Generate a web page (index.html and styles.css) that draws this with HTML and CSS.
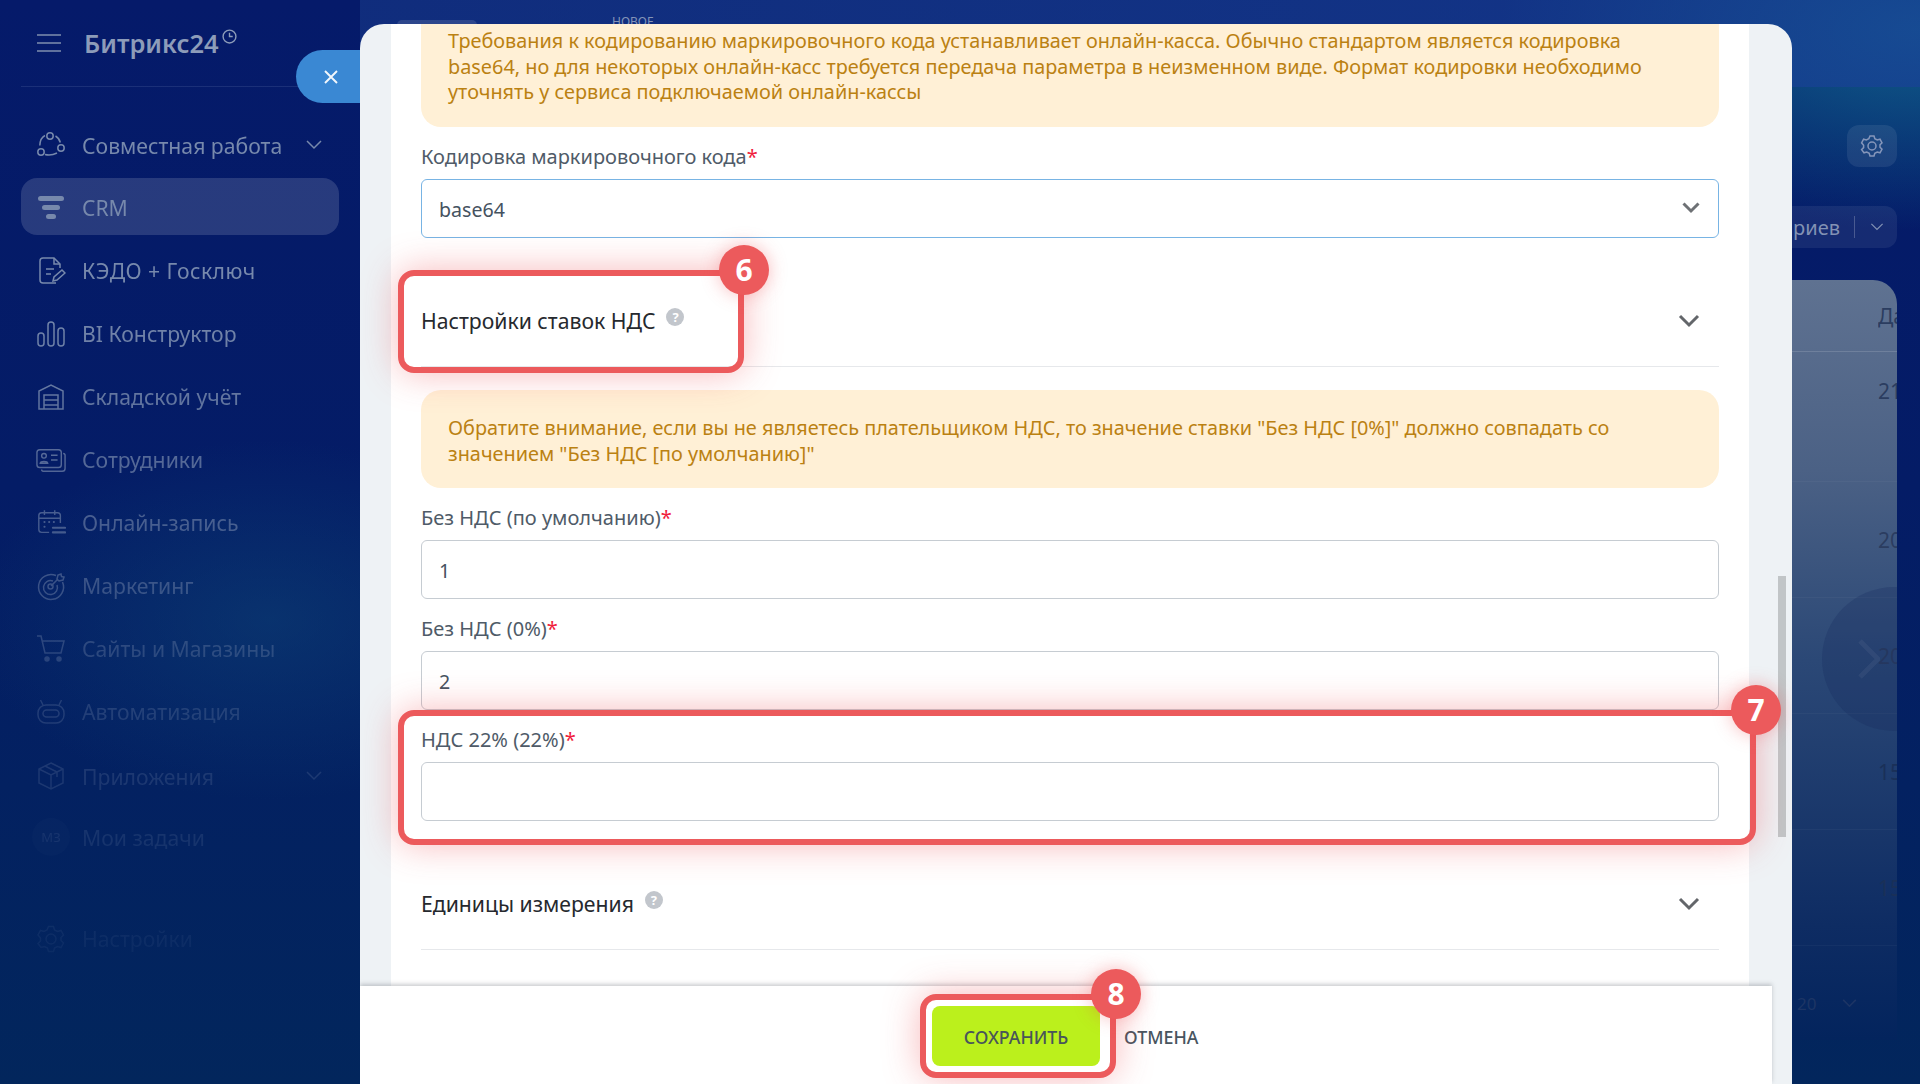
FILE: index.html
```html
<!DOCTYPE html>
<html lang="ru">
<head>
<meta charset="utf-8">
<title>Битрикс24</title>
<link rel="stylesheet" href="styles.css">
</head>
<body>
<div class="app">
  <aside class="sidebar">
    <div class="brand">
      <svg class="burger" viewBox="0 0 24 18"><path d="M0 1h24M0 9h24M0 17h24"/></svg>
      <span class="brand-name">Битрикс24</span>
      <svg class="clock" viewBox="0 0 14 14"><circle cx="7" cy="7" r="6"/><path d="M7 3.5V7h3"/></svg>
    </div>
    <nav class="nav">
      <a class="item item-a">
        <svg class="ico" viewBox="0 0 30 30"><circle cx="14" cy="6" r="3.2"/><circle cx="5" cy="22" r="3.2"/><circle cx="25" cy="18" r="3.2"/><path d="M9 5.500C6 7 4 10.500 3.800 15.500M19.500 6C22 7.500 23.800 10 24.300 12.500M9 24.500c4 1 8 .5 12-1.500"/></svg>
        <span class="label">Совместная работа</span>
        <svg class="chev" viewBox="0 0 16 10"><path d="M1 1l7 7 7-7"/></svg>
      </a>
      <a class="item item-active">
        <svg class="ico ico-solid" viewBox="0 0 30 30"><rect x="2" y="3" width="26" height="5" rx="2.500"/><rect x="6" y="12" width="18" height="5" rx="2.500"/><rect x="10" y="21" width="10" height="5" rx="2.500"/></svg>
        <span class="label">CRM</span>
      </a>
      <a class="item item-kedo">
        <svg class="ico" viewBox="0 0 30 30"><path d="M20 27H7a3 3 0 0 1-3-3V5a3 3 0 0 1 3-3h11l6 6v4"/><path d="M18 2v6h6"/><path d="M10 13h8M10 18h5"/><path d="M17 25l1-4 8-7 3 3-8 7z"/></svg>
        <span class="label">КЭДО + Госключ</span>
      </a>
      <a class="item">
        <svg class="ico" viewBox="0 0 30 30"><rect x="2" y="14" width="6" height="13" rx="3"/><rect x="12" y="3" width="6" height="24" rx="3"/><rect x="22" y="9" width="6" height="18" rx="3"/></svg>
        <span class="label">BI Конструктор</span>
      </a>
      <a class="item">
        <svg class="ico" viewBox="0 0 30 30"><path d="M3 27V9l12-6 12 6v18z"/><path d="M8 27V13h14v14M8 18h14M8 23h14"/></svg>
        <span class="label">Складской учёт</span>
      </a>
      <a class="item">
        <svg class="ico" viewBox="0 0 32 30"><rect x="1" y="4" width="26" height="19" rx="3"/><path d="M29 8c1.500 0 2 1 2 2v14c0 2-1 3-3 3H9c-2 0-3-1-3-2"/><circle cx="8.500" cy="10.500" r="2.500"/><path d="M4.500 18.500c.5-2.500 7.500-2.500 8 0zM16 10h7M16 15h7"/></svg>
        <span class="label">Сотрудники</span>
      </a>
      <a class="item">
        <svg class="ico" viewBox="0 0 32 30"><path d="M14 25H6a3 3 0 0 1-3-3V7a3 3 0 0 1 3-3h17a3 3 0 0 1 3 3v8"/><path d="M9 1.500v5M20 1.500v5M3 10h23"/><path d="M9 14h.1M14 14h.1M19 14h.1M9 19h.1M18 20h13M18 25h13" class="thick"/></svg>
        <span class="label">Онлайн-запись</span>
      </a>
      <a class="item">
        <svg class="ico" viewBox="0 0 30 30"><path d="M20 4.500A12.500 12.500 0 1 0 26.500 11"/><path d="M17 10a7 7 0 1 0 4 4"/><circle cx="14.500" cy="15.500" r="2.500"/><path d="M15 15l7-7M21 8l1-4 3-1 .5 2.500L28 6l-1 3-4 1z"/></svg>
        <span class="label">Маркетинг</span>
      </a>
      <a class="item">
        <svg class="ico" viewBox="0 0 30 30"><path d="M1 2h4l4 17h16l3-12H6"/><circle cx="11" cy="25" r="2" class="dot"/><circle cx="23" cy="25" r="2" class="dot"/></svg>
        <span class="label">Сайты и Магазины</span>
      </a>
      <a class="item">
        <svg class="ico" viewBox="0 0 30 30"><rect x="2" y="8" width="26" height="18" rx="8"/><rect x="7" y="13" width="16" height="7" rx="3.500"/><path d="M7 8L4.500 3M23 8l2.500-5"/></svg>
        <span class="label">Автоматизация</span>
      </a>
      <a class="item item-apps">
        <svg class="ico" viewBox="0 0 30 30"><path d="M15 2l12 6v14l-12 6-12-6V8z"/><path d="M3 8l12 6 12-6M15 14v14M9 5l12 6v5"/></svg>
        <span class="label">Приложения</span>
        <svg class="chev" viewBox="0 0 16 10"><path d="M1 1l7 7 7-7"/></svg>
      </a>
      <a class="item item-tasks">
        <span class="avatar">МЗ</span>
        <span class="label">Мои задачи</span>
      </a>
      <a class="item item-settings">
        <svg class="ico" viewBox="0 0 30 30"><circle cx="15" cy="15" r="5"/><path d="M12.500 2.500h5l1 3.500 3 1.500 3.500-1 2.500 4.500-2.500 2.500v3l2.500 2.500-2.500 4.500-3.500-1-3 1.500-1 3.500h-5l-1-3.500-3-1.500-3.500 1L2 19.500 4.500 17v-3L2 11l2.500-4.500 3.500 1 3-1.500z"/></svg>
        <span class="label">Настройки</span>
      </a>
    </nav>
  </aside>

  <main class="main">
    <div class="topbar">
      <span class="tab"></span>
      <span class="new">НОВОЕ</span>
    </div>
    <div class="tools">
      <button class="gear">
        <svg viewBox="0 0 30 30"><circle cx="15" cy="15" r="5"/><path d="M12.500 2.500h5l1 3.500 3 1.500 3.500-1 2.500 4.500-2.500 2.500v3l2.500 2.500-2.500 4.500-3.500-1-3 1.500-1 3.500h-5l-1-3.500-3-1.500-3.500 1L2 19.500 4.500 17v-3L2 11l2.500-4.500 3.500 1 3-1.500z"/></svg>
      </button>
      <div class="scen">
        <span class="scen-text">Сценариев</span>
        <span class="scen-sep"></span>
        <svg class="scen-chev" viewBox="0 0 16 10"><path d="M1 1l7 7 7-7"/></svg>
      </div>
    </div>
    <section class="card">
      <div class="row row-head"><span class="cell">Дата</span></div>
      <div class="row row-first"><span class="cell">21</span></div>
      <div class="row"><span class="cell">20</span></div>
      <div class="row"><span class="cell">20</span></div>
      <div class="row"><span class="cell">15</span></div>
      <div class="row"><span class="cell">15</span></div>
      <div class="pager"><span>20</span><svg viewBox="0 0 16 10"><path d="M1 1l7 7 7-7"/></svg></div>
      <div class="carousel"><svg viewBox="0 0 22 40"><path d="M2 2l18 18L2 38"/></svg></div>
    </section>
  </main>
</div>

<button class="close"><svg viewBox="0 0 16 16"><path d="M2 2l12 12M14 2L2 14"/></svg></button>

<div class="slider">
  <div class="sheet">
    <div class="warn warn-top">Требования к кодированию маркировочного кода устанавливает онлайн-касса. Обычно стандартом является кодировка base64, но для некоторых онлайн-касс требуется передача параметра в неизменном виде. Формат кодировки необходимо уточнять у сервиса подключаемой онлайн-кассы</div>
    <div class="field">
      <label class="flabel">Кодировка маркировочного кода<span class="req">*</span></label>
      <div class="input select">base64
        <svg class="select-chev" viewBox="0 0 18 12"><path d="M1.500 1.500L9 9l7.500-7.500"/></svg>
      </div>
    </div>
    <div class="section">
      <span class="stitle">Настройки ставок НДС</span>
      <span class="help">?</span>
      <svg class="section-chev" viewBox="0 0 22 14"><path d="M2 2l9 9 9-9"/></svg>
    </div>
    <div class="warn warn-vat">Обратите внимание, если вы не являетесь плательщиком НДС, то значение ставки "Без НДС [0%]" должно совпадать со значением "Без НДС [по умолчанию]"</div>
    <div class="field">
      <label class="flabel">Без НДС (по умолчанию)<span class="req">*</span></label>
      <div class="input">1</div>
    </div>
    <div class="field">
      <label class="flabel">Без НДС (0%)<span class="req">*</span></label>
      <div class="input">2</div>
    </div>
    <div class="field">
      <label class="flabel">НДС 22% (22%)<span class="req">*</span></label>
      <div class="input"></div>
    </div>
    <div class="section">
      <span class="stitle">Единицы измерения</span>
      <span class="help">?</span>
      <svg class="section-chev" viewBox="0 0 22 14"><path d="M2 2l9 9 9-9"/></svg>
    </div>
  </div>
  <div class="scrollbar"></div>
  <div class="footer">
    <button class="save">СОХРАНИТЬ</button>
    <button class="cancel">ОТМЕНА</button>
  </div>
  <div class="mark mark-6"><span class="badge">6</span></div>
  <div class="mark mark-7"><span class="badge">7</span></div>
  <div class="mark mark-8"><span class="badge">8</span></div>
</div>
</body>
</html>
```
FILE: styles.css
```css
* { box-sizing: border-box; }
html, body { margin: 0; height: 1084px; overflow: hidden; }
body {
  font-family: "Noto Sans", "Open Sans", sans-serif;
  background:
    radial-gradient(420px 200px at 1920px 30px, rgba(20,120,150,.75), rgba(20,120,150,0) 100%),
    radial-gradient(300px 180px at 270px 620px, rgba(14,70,120,.5), rgba(14,70,120,0) 100%),
    linear-gradient(180deg, #051a6a 0%, #041c66 45%, #02265c 100%);
}
.app { display: flex; height: 1084px; }
svg { display: block; fill: none; stroke: currentColor; }

/* sidebar */
.sidebar { width: 360px; flex: none; padding: 0 21px; }
.brand {
  height: 87px; margin-right: -21px; padding: 0 0 1px 16px;
  display: flex; align-items: center;
  border-bottom: 1px solid rgba(140,160,200,.16);
  color: #8d9cb9;
}
.burger { width: 24px; height: 18px; stroke-width: 1.6; color: #7f8eaf; }
.brand-name { margin-left: 23px; font-size: 25.5px; font-weight: 600; line-height: 36px; }
.clock { width: 15px; height: 15px; margin: -12px 0 0 3px; stroke-width: 1.3; }
.nav {
  margin-top: 28px; display: flex; flex-direction: column;
  -webkit-mask-image: linear-gradient(180deg, #000 0%, #000 22%, rgba(0,0,0,.3) 65%, rgba(0,0,0,.07) 100%);
  mask-image: linear-gradient(180deg, #000 0%, #000 22%, rgba(0,0,0,.3) 65%, rgba(0,0,0,.07) 100%);
}
.item {
  height: 57px; margin-bottom: 6px; padding: 2px 14px 0 15px;
  display: flex; align-items: center;
  color: #7789ac; font-size: 21.2px; border-radius: 16px;
}
.item-a { height: 60px; margin-bottom: 3px; padding-top: 0; }
.item-active { background: rgba(255,255,255,.14); }
.item-kedo .label { letter-spacing: .45px; }
.item-apps { height: 58px; margin-top: 2px; margin-bottom: 3px; padding-top: 0; }
.item-tasks { height: 58px; margin-bottom: 43px; padding-top: 0; }
.ico { width: 30px; height: 30px; flex: none; stroke-width: 1.5; }
.ico-solid { fill: currentColor; stroke: none; }
.thick { stroke-width: 2.2; stroke-linecap: round; }
.dot { fill: currentColor; }
.label { margin-left: 16px; flex: 1; white-space: nowrap; }
.chev { width: 16px; height: 10px; flex: none; stroke-width: 1.5; margin-right: 3px; }
.avatar {
  width: 38px; height: 38px; margin: 0 -4px; flex: none; border-radius: 50%;
  display: flex; align-items: center; justify-content: center;
  background: rgba(255,255,255,.09); font-size: 13px;
}

/* page behind the slider */
.main { flex: 1; display: flex; flex-direction: column; min-width: 0; }
.topbar {
  height: 87px; flex: none; position: relative;
  background: linear-gradient(90deg, rgba(25,60,140,.55), rgba(25,65,150,.7));
}
.tab { display: block; position: absolute; left: 37px; top: 20px; width: 80px; height: 10px; border-radius: 8px; background: rgba(255,255,255,.12); }
.new { position: absolute; left: 252px; top: 13px; font-size: 12px; color: #8495b8; }
.tools { height: 193px; flex: none; padding: 38px 23px 0 0; display: flex; flex-direction: column; align-items: flex-end; gap: 39px; }
.gear {
  width: 50px; height: 42px; padding: 0; border: 0; border-radius: 12px;
  background: rgba(255,255,255,.08); color: #8596ba;
  display: flex; align-items: center; justify-content: center;
}
.gear svg { width: 24px; height: 24px; stroke-width: 1.9; }
.scen {
  height: 42px; padding: 0 13px 0 15px; border-radius: 12px; background: rgba(255,255,255,.07);
  display: flex; align-items: center; color: #8292b4; font-size: 20px;
}
.scen-sep { width: 1px; height: 22px; margin: 0 15px 0 14px; background: rgba(255,255,255,.22); }
.scen-chev { width: 14px; height: 8px; stroke-width: 1.5; }
.card {
  position: relative; height: 760px; margin: 0 23px 0 37px; flex: none; overflow: hidden;
  border-radius: 24px 24px 0 0;
  background: linear-gradient(180deg, #5f7291 0%, #4b6185 25%, #2b4876 50%, #0e2c63 85%, #03245d 100%);
  color: #2b3d60; font-size: 21px;
}
.row { height: 116px; display: flex; align-items: center; justify-content: flex-end; border-bottom: 1px solid rgba(255,255,255,.035); }
.row-head { height: 72px; border-bottom: 1px solid rgba(255,255,255,.14); }
.row-first { height: 130px; align-items: flex-start; padding-top: 25px; }
.cell { width: 19px; overflow: hidden; white-space: nowrap; }
.row:nth-child(5), .row:nth-child(6) { color: #1a3058; }
.pager {
  position: absolute; left: 1400px; top: 712px; width: 90px;
  display: flex; align-items: center; gap: 26px; color: #1d3565; font-size: 17px;
}
.pager svg { width: 15px; height: 9px; stroke-width: 1.8; }
.carousel {
  position: absolute; left: 1425px; top: 307px; width: 144px; height: 144px; border-radius: 50%;
  background: rgba(20,40,90,.25); display: flex; align-items: center; padding-left: 36px; color: rgba(255,255,255,.05);
}
.carousel svg { width: 22px; height: 40px; stroke-width: 5; }

/* close button */
.close {
  position: absolute; left: 296px; top: 50px; width: 64px; height: 53px; padding: 0 0 0 27px;
  border: 0; border-radius: 27px 0 0 27px; background: #3a88d3; color: #f2f7fc;
  display: flex; align-items: center;
}
.close svg { width: 16px; height: 16px; stroke-width: 1.9; }

/* slider */
.slider {
  position: absolute; left: 360px; top: 24px; width: 1432px; height: 1060px;
  background: #eef2f5; border-radius: 24px 24px 0 0; overflow: hidden;
}
.sheet { margin-left: 31px; width: 1358px; height: 1060px; padding: 0 30px; background: #fff; }
.warn { background: #fff0d6; color: #bb8112; font-size: 19.85px; line-height: 25.5px; border-radius: 0 0 20px 20px; padding: 4px 27px 22.5px; }
.warn-vat { margin-top: 23px; padding: 25px 27px 22px; border-radius: 20px; }
.field { margin-top: 17px; }
.flabel { display: block; height: 25px; margin-bottom: 10px; font-size: 20px; line-height: 25px; color: #4f5b68; }
.req { color: #f0213c; }
.input {
  position: relative; height: 59px; padding: 2px 17px 0 17px;
  border: 1.5px solid #c6ccd2; border-radius: 6px; background: #fff;
  display: flex; align-items: center; font-size: 19.6px; color: #45525f;
}
.select { border-color: #78b4e4; }
.select-chev { position: absolute; right: 18px; top: 22px; width: 18px; height: 12px; stroke: #6e7175; stroke-width: 3; }
.section {
  position: relative; height: 129px; padding-top: 69px; border-bottom: 1px solid #e6e8eb;
  display: flex; align-items: flex-start; font-size: 21.2px; line-height: 28px; color: #26292e;
}
.stitle { white-space: nowrap; }
.help {
  width: 18px; height: 18px; margin: 1px 0 0 11px; border-radius: 50%;
  background: #c2c6cc; color: #fff; font-size: 13px; font-weight: 700; line-height: 18px; text-align: center;
}
.section-chev { position: absolute; right: 19px; top: 76px; width: 22px; height: 14px; stroke: #63666a; stroke-width: 3; }

.scrollbar { position: absolute; left: 1418px; top: 552px; width: 8px; height: 261px; background: #c1c5c7; }
.footer {
  position: absolute; left: 0; top: 962px; width: 1412px; height: 98px; background: #fff;
  box-shadow: 0 -2px 4px rgba(110,115,120,.35);
  display: flex; align-items: flex-start; padding: 20px 0 0 572px;
}
.save {
  width: 168px; height: 60px; padding: 2px 0 0; border: 0; border-radius: 8px; background: #bbf01c;
  font: 500 17.8px "Noto Sans", sans-serif; color: #48555a;
}
.cancel {
  margin-left: 24px; height: 60px; padding: 2px 0 0; border: 0; background: none;
  font: 500 17.8px "Noto Sans", sans-serif; color: #48555f;
}

/* red callouts */
.mark {
  position: absolute; border: 6px solid #ec5a5c; border-radius: 16px;
  box-shadow: 0 0 36px rgba(236,70,75,.38);
}
.mark-6 { left: 38px; top: 246px; width: 346px; height: 103px; }
.mark-7 { left: 38px; top: 686px; width: 1358px; height: 135px; }
.mark-8 { left: 560px; top: 970px; width: 196px; height: 84px; }
.badge {
  position: absolute; right: -31px; top: -31px; width: 50px; height: 50px; border-radius: 50%;
  background: #ec5a5c; color: #fff; font: 700 30px/50px "Open Sans", sans-serif; text-align: center;
  box-shadow: 0 0 18px rgba(236,70,75,.35);
}
```
